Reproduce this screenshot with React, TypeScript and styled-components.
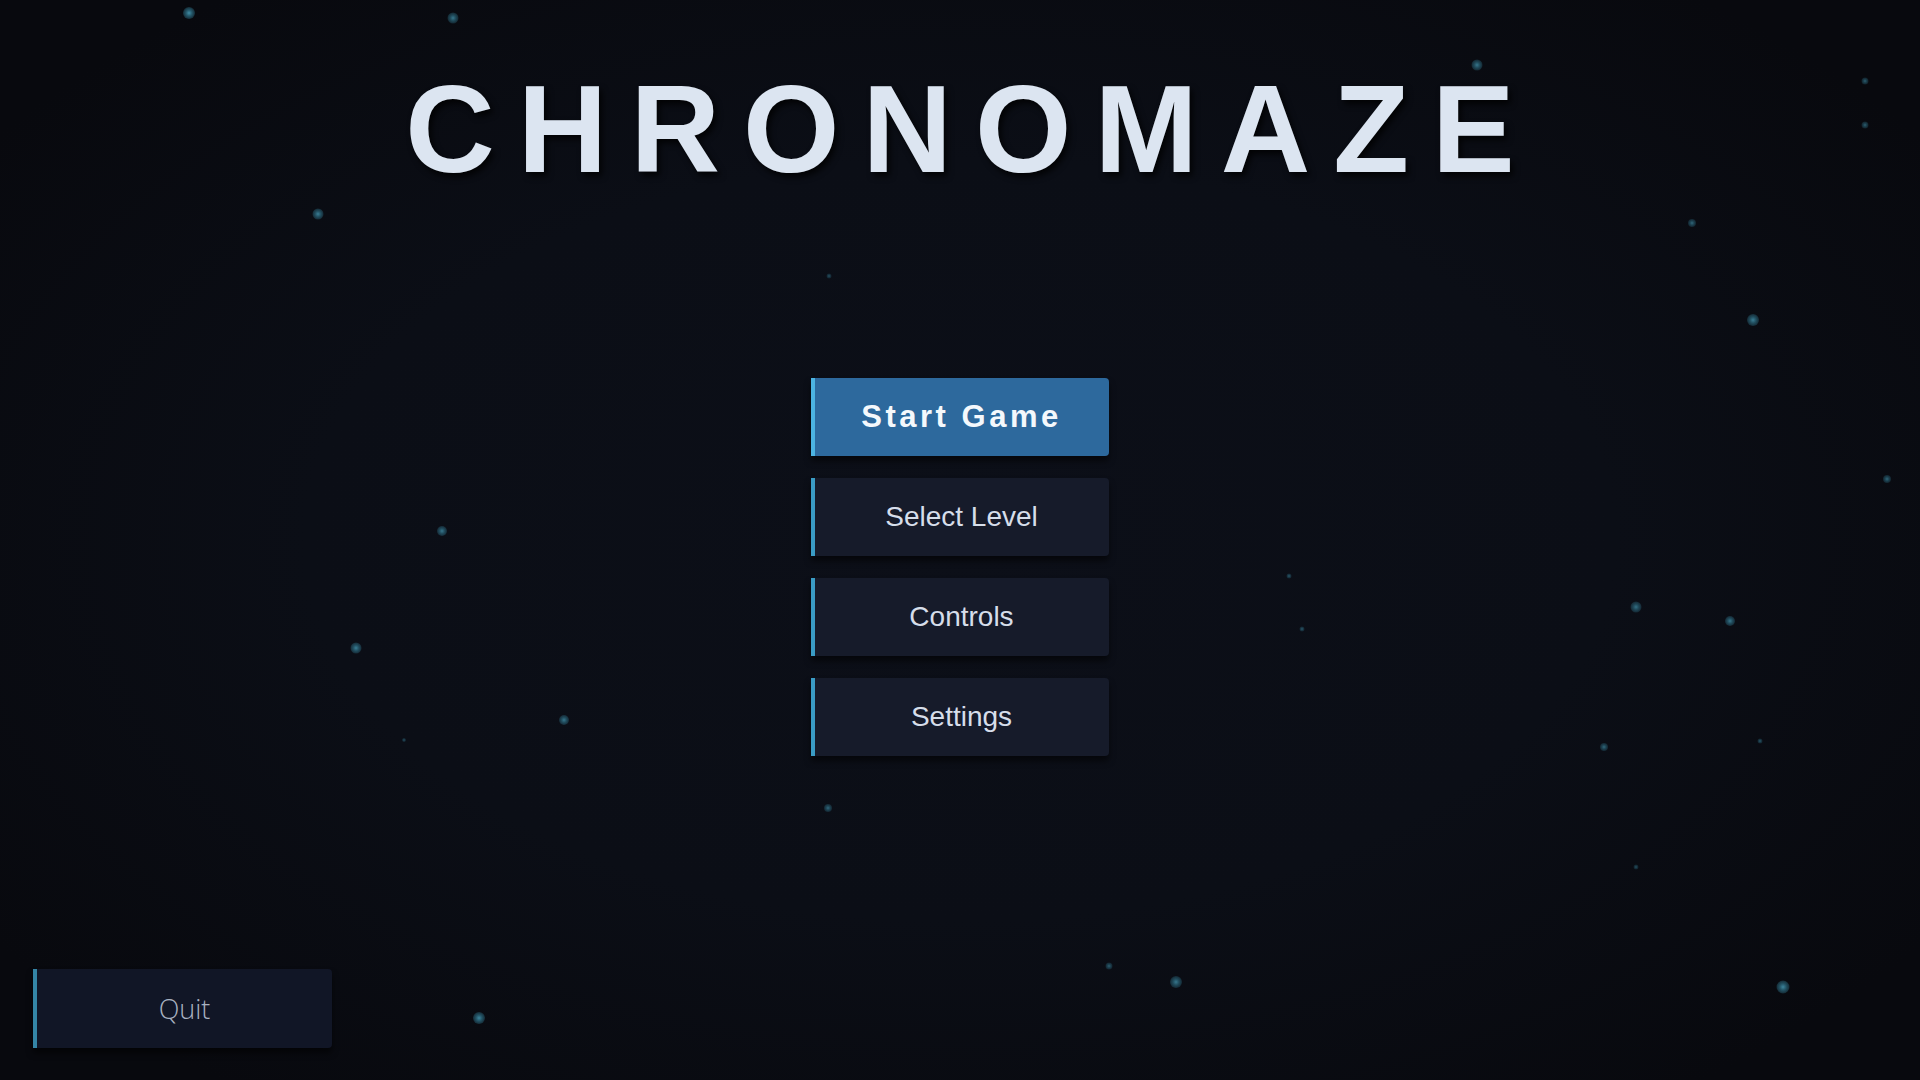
import React from "react";
import styled, { createGlobalStyle } from "styled-components";

const GlobalStyle = createGlobalStyle`
  html, body {
    margin: 0;
    padding: 0;
    background: #08090e;
  }
  #root {
    min-height: 100vh;
  }
`

interface Particle {
  x: number
  y: number
  size: number
  alpha: number
}

// star dust positions, picked by hand
const particles: Array<Particle> = [
  { x: 189, y: 13, size: 12, alpha: 0.85 },
  { x: 453, y: 18, size: 11, alpha: 0.7 },
  { x: 318, y: 214, size: 11, alpha: 0.75 },
  { x: 829, y: 276, size: 5, alpha: 0.45 },
  { x: 1477, y: 65, size: 11, alpha: 0.7 },
  { x: 1865, y: 81, size: 7, alpha: 0.55 },
  { x: 1865, y: 125, size: 7, alpha: 0.55 },
  { x: 1692, y: 223, size: 8, alpha: 0.6 },
  { x: 1753, y: 320, size: 12, alpha: 0.75 },
  { x: 1887, y: 479, size: 8, alpha: 0.6 },
  { x: 442, y: 531, size: 10, alpha: 0.7 },
  { x: 356, y: 648, size: 11, alpha: 0.75 },
  { x: 564, y: 720, size: 10, alpha: 0.7 },
  { x: 404, y: 740, size: 4, alpha: 0.45 },
  { x: 1289, y: 576, size: 5, alpha: 0.5 },
  { x: 1302, y: 629, size: 5, alpha: 0.5 },
  { x: 1636, y: 607, size: 11, alpha: 0.65 },
  { x: 1730, y: 621, size: 10, alpha: 0.7 },
  { x: 1604, y: 747, size: 8, alpha: 0.6 },
  { x: 1760, y: 741, size: 5, alpha: 0.5 },
  { x: 828, y: 808, size: 8, alpha: 0.6 },
  { x: 1636, y: 867, size: 5, alpha: 0.45 },
  { x: 1109, y: 966, size: 7, alpha: 0.55 },
  { x: 1176, y: 982, size: 12, alpha: 0.7 },
  { x: 1783, y: 987, size: 13, alpha: 0.8 },
  { x: 479, y: 1018, size: 12, alpha: 0.8 },
]

const Screen = styled.div`
  position: relative;
  width: 100%;
  height: 100vh;
  overflow: hidden;
  display: flex;
  flex-direction: column;
  align-items: stretch;
  background: radial-gradient(ellipse 62% 64% at 50% 50%, #0c0f18 0%, #0b0e16 55%, #08090e 100%);
  font-family: "Liberation Sans", Arial, sans-serif;
`

const DustLayer = styled.div`
  position: absolute;
  inset: 0;
  pointer-events: none;
`

const Dust = styled.span`
  position: absolute;
  border-radius: 50%;
  background: radial-gradient(circle, #4aa3bf 0%, rgba(52, 132, 158, 0.75) 35%, rgba(30, 90, 110, 0) 100%);
  transform: translate(-50%, -50%);
`

const Title = styled.h1`
  position: relative;
  margin: 67px 0 187px;
  padding-left: 23px;
  text-align: center;
  font-family: "Liberation Sans", Arial, sans-serif;
  font-weight: 700;
  font-size: 124px;
  line-height: 1;
  letter-spacing: 23px;
  color: #dce5f1;
  text-shadow: 3px 4px 6px rgba(0, 0, 0, 0.8);
`

const Menu = styled.nav`
  position: relative;
  display: flex;
  flex-direction: column;
  align-items: center;
  gap: 22px;
`

const MenuButton = styled.button<{ $primary?: boolean }>`
  box-sizing: border-box;
  width: 298px;
  height: 78px;
  margin-left: -1px;
  display: flex;
  align-items: center;
  justify-content: center;
  border: none;
  border-left: 4px solid ${p => (p.$primary ? "#4cb4e2" : "#3a9cc5")};
  border-radius: 0 4px 4px 0;
  background: ${p => (p.$primary ? "#2d699d" : "#161b2a")};
  box-shadow: 0 5px 6px rgba(0, 0, 0, 0.55);
  color: ${p => (p.$primary ? "#f4f8fc" : "#d6deea")};
  font-family: "Liberation Sans", Arial, sans-serif;
  font-size: ${p => (p.$primary ? "31px" : "28px")};
  font-weight: ${p => (p.$primary ? 700 : 400)};
  letter-spacing: ${p => (p.$primary ? "3.5px" : "0")};
  padding: 0;
  cursor: pointer;
`

const Footer = styled.div`
  position: relative;
  margin-top: auto;
  padding: 0 0 32px 33px;
`

const QuitButton = styled.button`
  box-sizing: border-box;
  width: 299px;
  height: 79px;
  display: flex;
  align-items: center;
  justify-content: center;
  border: none;
  border-left: 4px solid #3485a6;
  border-radius: 0 4px 4px 0;
  background: #111626;
  box-shadow: 0 5px 6px rgba(0, 0, 0, 0.55);
  color: #a9b2c1;
  font-family: "Open Sans", "Noto Sans", sans-serif;
  font-weight: 300;
  font-size: 27px;
  padding: 0;
  cursor: pointer;
`

const menuItems = ["Start Game", "Select Level", "Controls", "Settings"]

const App = () => {
  return (
    <>
      <GlobalStyle />
      <Screen>
        <DustLayer>
          {particles.map((p, i) => (
            <Dust
              key={i}
              style={{ left: p.x, top: p.y, width: p.size, height: p.size, opacity: p.alpha }}
            />
          ))}
        </DustLayer>
        <Title>CHRONOMAZE</Title>
        <Menu>
          {menuItems.map((label, i) => (
            <MenuButton key={label} $primary={i === 0}>
              {label}
            </MenuButton>
          ))}
        </Menu>
        <Footer>
          <QuitButton>Quit</QuitButton>
        </Footer>
      </Screen>
    </>
  );
};

export default App;
